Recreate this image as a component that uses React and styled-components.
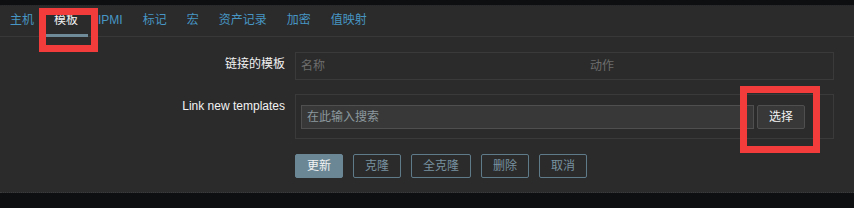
import React from "react";
import styled, { createGlobalStyle } from "styled-components";

const Global = createGlobalStyle`
  html, body { margin: 0; padding: 0; background: #0e0f11; }
  body { font-family: "Liberation Sans", Arial, "Noto Sans CJK SC", sans-serif; font-size: 12px; }
  * { box-sizing: border-box; }
`;

const Page = styled.div`
  position: relative;
  width: 854px;
  height: 208px;
  padding-top: 5px;
  background: #0e0f11;
`;

const Panel = styled.div`
  height: 188px;
  background: #2b2b2b;
  border-top: 1px dotted #24262a;
  border-bottom: 1px dotted #3a3b3d;
  display: flex;
  flex-direction: column;
`;

const TabBar = styled.div`
  display: flex;
  height: 32px;
  margin-top: -1px;
  border-bottom: 1px solid #383838;
`;

const Tab = styled.div`
  height: 32px;
  margin-bottom: -1px;
  padding: 0 10px;
  line-height: 31px;
  color: ${(p) => (p.$active ? "#f2f2f2" : "#4796c4")};
  box-shadow: ${(p) => (p.$active ? "inset 0 -3px 0 #6f8a98" : "none")};
  white-space: nowrap;
`;

const Form = styled.div`
  display: grid;
  grid-template-columns: 285px 539px;
  column-gap: 10px;
  row-gap: 14px;
  padding-top: 15px;
`;

const Label = styled.div`
  text-align: right;
  color: #f2f2f2;
  line-height: 14px;
  padding-top: 5px;
`;

const TableBox = styled.div`
  height: 28px;
  border: 1px solid #3a3a3a;
  display: grid;
  grid-template-columns: 289px 1fr;
  line-height: 26px;
  color: #6d6d6d;
`;

const HeadCell = styled.div`
  padding-left: 5px;
`;

const LinkBox = styled.div`
  border: 1px solid #3a3a3a;
  padding: 10px 5px 9px;
  display: flex;
  gap: 3px;
`;

const SearchInput = styled.div`
  width: 453px;
  height: 24px;
  background: #383838;
  border: 1px solid #4f4f4f;
  color: #8c989e;
  line-height: 22px;
  padding-left: 5px;
`;

const SelectButton = styled.div`
  width: 48px;
  height: 24px;
  background: #383838;
  border: 1px solid #4f4f4f;
  border-radius: 2px;
  color: #f2f2f2;
  line-height: 22px;
  text-align: center;
`;

const Actions = styled.div`
  grid-column: 2;
  display: flex;
  gap: 10px;
  margin-top: 1px;
`;

const Button = styled.div`
  height: 24px;
  padding: 0 11px;
  border: 1px solid ${(p) => (p.$primary ? "#6b8796" : "#5f7a89")};
  background: ${(p) => (p.$primary ? "#6b8796" : "transparent")};
  color: ${(p) => (p.$primary ? "#f2f2f2" : "#7892a0")};
  border-radius: 2px;
  line-height: 22px;
  white-space: nowrap;
`;

const Highlight = styled.div`
  position: absolute;
  left: ${(p) => p.$x}px;
  top: ${(p) => p.$y}px;
  width: ${(p) => p.$w}px;
  height: ${(p) => p.$h}px;
  border: 7px solid #f23b3b;
  pointer-events: none;
`;

const tabs = ["主机", "模板", "IPMI", "标记", "宏", "资产记录", "加密", "值映射"];

export default function App() {
  return (
    <>
      <Global />
      <Page>
        <Panel>
          <TabBar>
            {tabs.map((t) => (
              <Tab key={t} $active={t === "模板"}>
                {t}
              </Tab>
            ))}
          </TabBar>
          <Form>
            <Label>链接的模板</Label>
            <TableBox>
              <HeadCell>名称</HeadCell>
              <HeadCell>动作</HeadCell>
            </TableBox>
            <Label>Link new templates</Label>
            <LinkBox>
              <SearchInput>在此输入搜索</SearchInput>
              <SelectButton>选择</SelectButton>
            </LinkBox>
            <Actions>
              <Button $primary>更新</Button>
              <Button>克隆</Button>
              <Button>全克隆</Button>
              <Button>删除</Button>
              <Button>取消</Button>
            </Actions>
          </Form>
        </Panel>
        <Highlight $x={39} $y={8} $w={59} $h={44} />
        <Highlight $x={740} $y={86} $w={80} $h={67} />
      </Page>
    </>
  );
}
